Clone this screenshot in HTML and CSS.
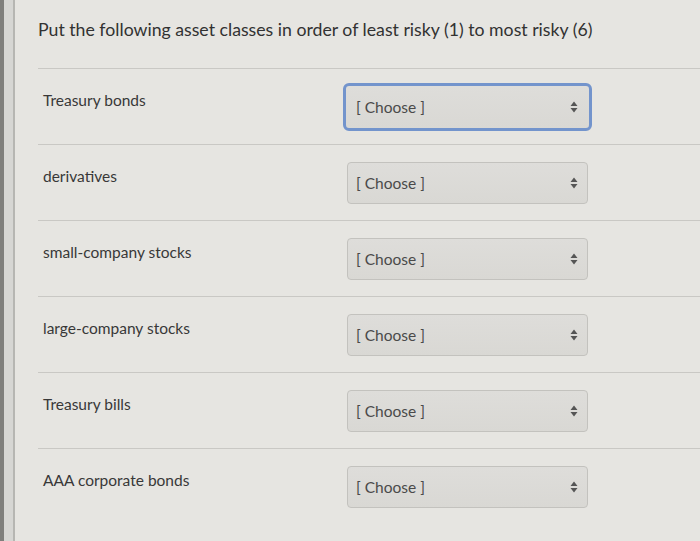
FILE: index.html
```html
<!DOCTYPE html>
<html lang="en">
<head>
    <meta charset="UTF-8">
    <title>Asset classes quiz</title>
    <link rel="stylesheet" href="styles.css">
</head>
<body>
    <div class="page">
        <div class="card">
            <p class="question">Put the following asset classes in order of least risky (1) to most risky (6)</p>

            <div class="answers">
                <div class="row">
                    <div class="label">Treasury bonds</div>
                    <div class="select focused">
                        <span>[ Choose ]</span>
                        <svg class="arrows" width="8" height="12" viewBox="0 0 8 12"><path d="M4 0.5 L7.5 5 L0.5 5 Z M4 11.5 L7.5 7 L0.5 7 Z"/></svg>
                    </div>
                </div>
                <div class="row">
                    <div class="label">derivatives</div>
                    <div class="select">
                        <span>[ Choose ]</span>
                        <svg class="arrows" width="8" height="12" viewBox="0 0 8 12"><path d="M4 0.5 L7.5 5 L0.5 5 Z M4 11.5 L7.5 7 L0.5 7 Z"/></svg>
                    </div>
                </div>
                <div class="row">
                    <div class="label">small-company stocks</div>
                    <div class="select">
                        <span>[ Choose ]</span>
                        <svg class="arrows" width="8" height="12" viewBox="0 0 8 12"><path d="M4 0.5 L7.5 5 L0.5 5 Z M4 11.5 L7.5 7 L0.5 7 Z"/></svg>
                    </div>
                </div>
                <div class="row">
                    <div class="label">large-company stocks</div>
                    <div class="select">
                        <span>[ Choose ]</span>
                        <svg class="arrows" width="8" height="12" viewBox="0 0 8 12"><path d="M4 0.5 L7.5 5 L0.5 5 Z M4 11.5 L7.5 7 L0.5 7 Z"/></svg>
                    </div>
                </div>
                <div class="row">
                    <div class="label">Treasury bills</div>
                    <div class="select">
                        <span>[ Choose ]</span>
                        <svg class="arrows" width="8" height="12" viewBox="0 0 8 12"><path d="M4 0.5 L7.5 5 L0.5 5 Z M4 11.5 L7.5 7 L0.5 7 Z"/></svg>
                    </div>
                </div>
                <div class="row">
                    <div class="label">AAA corporate bonds</div>
                    <div class="select">
                        <span>[ Choose ]</span>
                        <svg class="arrows" width="8" height="12" viewBox="0 0 8 12"><path d="M4 0.5 L7.5 5 L0.5 5 Z M4 11.5 L7.5 7 L0.5 7 Z"/></svg>
                    </div>
                </div>
            </div>
        </div>
    </div>
</body>
</html>
```

FILE: styles.css
```css
body { margin: 0; font-family: Lato, 'Noto Sans', Arial, sans-serif; background-color: #e4e3df; color: #383838; }
.page { min-height: 541px; border-left: 4px solid #7f7f7c; padding-left: 9px; background-color: #d6d6d3; box-sizing: border-box; }
.card { min-height: 541px; border-left: 2px solid #b6b6b2; background-color: #e6e5e1; padding: 18px 0 0 23px; box-sizing: border-box; }
.question { margin: 0; font-size: 17.7px; line-height: 24px; color: #323232; }
.answers { margin-top: 26px; }
.row { display: flex; height: 76px; border-top: 1px solid #c9c8c4; box-sizing: border-box; }
.label { width: 304px; padding: 21px 0 0 5px; font-size: 15.5px; line-height: 20px; }
.select { display: flex; align-items: center; justify-content: space-between; width: 241px; height: 42px; margin-top: 17px; padding: 0 9px 0 8px; box-sizing: border-box; border: 1px solid #c3c2be; border-radius: 4px; background: linear-gradient(#dedddA, #d9d8d4); font-size: 15.5px; color: #4a4a4a; }
.select.focused { margin-top: 14px; width: 249px; height: 48px; margin-left: -4px; padding: 0 11px 0 10px; border: 3px solid #7394cc; border-radius: 6px; }
.arrows { fill: #555; }
```
